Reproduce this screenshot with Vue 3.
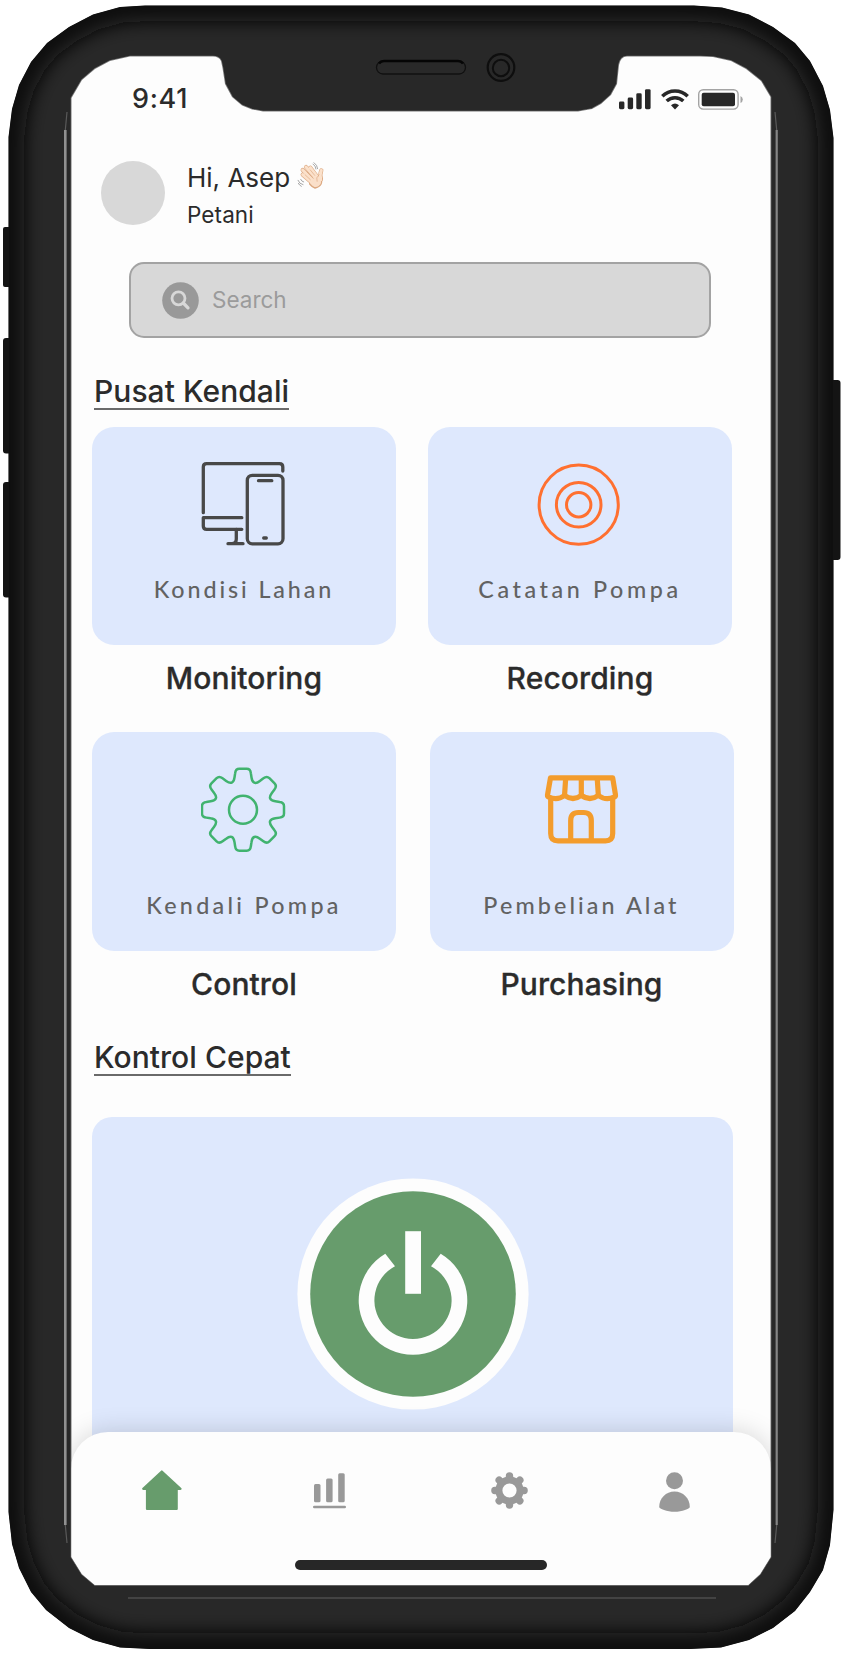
<script setup>
const screenPath =
  'M71.5 98L82 80L95 69L110 61L130 56.5H213Q219 56.5 221 61L222.500 68L225 84L232 97L242 105.500L252 109.500L263 111.500H578L592 109L601 104L611 95L617 84L619 65Q620.5 56.5 627 56.500H700L713 57L731 61L746 69L761 81L770.5 97V1557L760 1574L748 1585H95L82 1574L71.500 1557Z'

const bodyPath =
  'M8.500 137L12 109L19 85L31 62L47 43L69 27L93 14.500L120 7L145 5.500H694L722 7.500L749 14.500L773 27L795 43L810 61L823 86L830 110L833.500 138V1510L830 1545L823 1570L810 1592L795 1611L773 1628L749 1640L721 1647.500L690 1649H150L120 1647.500L93 1640L69 1628L46 1610L31 1592L19 1568L12 1544L8.500 1512Z'

// tracking: caption letter spacing in px
const rows = [
  {
    id: 'top',
    tiles: [
      { icon: 'devices', caption: 'Kondisi Lahan', title: 'Monitoring', tracking: 2.9 },
      { icon: 'rings', caption: 'Catatan Pompa', title: 'Recording', tracking: 3.6 },
    ],
  },
  {
    id: 'bottom',
    tiles: [
      { icon: 'gear', caption: 'Kendali Pompa', title: 'Control', tracking: 3.3 },
      { icon: 'store', caption: 'Pembelian Alat', title: 'Purchasing', tracking: 3.1 },
    ],
  },
]

// One tooth of the cog plus the valley after it, repeated every 45 degrees
const tooth = [
  ['L', [-23.5, -110]],
  ['Q', [-22, -123], [-11, -123]],
  ['L', [11, -123]],
  ['Q', [22, -123], [23.5, -110]],
  ['L', [25.5, -97]],
  ['C', [28, -80], [37, -76], [50.6, -86.6]],
]

function cogPath(scale) {
  let d = `M${-25.5 * scale} ${-97 * scale}`
  for (let i = 0; i < 8; i++) {
    const c = Math.cos((i * Math.PI) / 4)
    const s = Math.sin((i * Math.PI) / 4)
    for (const [cmd, ...pts] of tooth) {
      d += cmd + pts.map(([x, y]) => `${((x * c - y * s) * scale).toFixed(2)} ${((x * s + y * c) * scale).toFixed(2)}`).join(' ')
    }
  }
  return d + 'Z'
}
const cog = cogPath(1 / 3)
const spokes = [0, 45, 90, 135]
</script>

<template>
  <div class="phone">
    <svg class="frame" viewBox="0 0 842 1660" width="842" height="1660" aria-hidden="true">
      <defs>
        <clipPath id="body-clip"><path :d="bodyPath" /></clipPath>
        <filter id="soft" x="-10%" y="-10%" width="120%" height="120%"><feGaussianBlur stdDeviation="9" /></filter>
      </defs>
      <g fill="#141414">
        <rect x="3" y="227" width="12" height="60" rx="2" />
        <rect x="3" y="338" width="12" height="115.500" rx="3" />
        <rect x="3" y="482" width="12" height="115.500" rx="3" />
        <rect x="828" y="380" width="12.500" height="180" rx="3" />
      </g>
      <g clip-path="url(#body-clip)">
        <path :d="bodyPath" fill="#282828" />
        <path :d="bodyPath" fill="none" stroke="#080808" stroke-width="32" filter="url(#soft)" />
      </g>
      <path d="M65.300 130V1525" stroke="#909090" stroke-width="2.600" />
      <path d="M776.700 130V1525" stroke="#858585" stroke-width="2.200" />
      <path d="M65.300 130L67 112M65.300 1525L67 1543M776.700 130L775 112M776.700 1525L775 1543" stroke="#5a5a5a" stroke-width="1.200" />
      <path d="M128 1598H716" stroke="#4c4c4c" stroke-width="1.500" />
      <rect x="376.500" y="61" width="89" height="13" rx="6.500" fill="#292929" stroke="#101010" stroke-width="1.300" />
      <path d="M379 63.500Q381 61 384 61H458Q461 61 463 63.500" fill="none" stroke="#050505" stroke-width="2.600" />
      <g fill="none" stroke="#0e0e0e">
        <circle cx="501" cy="67.500" r="13.300" stroke-width="2.200" />
        <circle cx="501" cy="68" r="8.200" stroke-width="2" />
      </g>
      <path :d="screenPath" fill="none" stroke="#777" stroke-width="1.600" />
    </svg>

    <main class="screen">
      <div class="status">
        <span class="clock">9:41</span>
        <div class="signals">
          <svg width="32" height="21" viewBox="0 0 32 21" fill="#272727">
            <rect x="0" y="12.500" width="5.400" height="7.700" rx="1.400" />
            <rect x="8.700" y="8.500" width="5.400" height="11.700" rx="1.400" />
            <rect x="17.300" y="4.300" width="5.400" height="15.900" rx="1.400" />
            <rect x="26" y="0.200" width="5.600" height="20" rx="1.400" />
          </svg>
          <svg width="28" height="21" viewBox="0 0 28 21" fill="none" stroke="#272727" stroke-width="3.500">
            <path d="M1.300 7.300A18 18 0 0 1 26.700 7.300" />
            <path d="M5.700 12.100A12 12 0 0 1 22.300 12.100" />
            <path d="M10 16.200Q14 12.800 18 16.200L14 20.500Z" fill="#272727" stroke="none" />
          </svg>
          <svg width="45" height="21" viewBox="0 0 45 21">
            <rect x="0.700" y="0.700" width="39.400" height="19.400" rx="4.500" fill="none" stroke="#a4a4a4" stroke-width="1.400" />
            <rect x="3.700" y="3.700" width="33.300" height="13.500" rx="2" fill="#272727" />
            <path d="M42.500 7V14Q44.800 12.800 44.800 10.500T42.500 7Z" fill="#a4a4a4" />
          </svg>
        </div>
      </div>

      <header class="profile">
        <div class="avatar"></div>
        <div class="who">
          <div class="hello">
            <span>Hi, Asep</span>
            <svg class="wave" width="28" height="28" viewBox="0 0 84 84" fill="none" stroke-linecap="round" stroke-linejoin="round">
              <g stroke="#dca982" stroke-width="12.500">
                <path d="M17 38L45 62M17 24L48 56M27 15L57 50M40 17L61 45" />
                <path d="M73 25Q68 36 72 52" />
              </g>
              <path d="M38 58L60 40L72 48Q80 72 54 78Q46 76 38 66Z" fill="#fadfc9" stroke="#dca982" stroke-width="4" />
              <g stroke="#fbe1cb" stroke-width="9">
                <path d="M17 38L45 62M17 24L48 56M27 15L57 50M40 17L61 45" />
                <path d="M73 25Q68 36 71 53" />
              </g>
              <path d="M40 58L60 42L70 50Q77 70 54 75Z" fill="#fadfc9" />
              <path d="M25 39L40 53M30 30L47 46M40 24L53 40M66 38Q55 47 60 58" stroke="#dca982" stroke-width="2" />
              <path d="M48 6Q56 11 57 21M51 2Q61 9 62 20M3 55Q7 66 18 68M4 64Q7 70 13 73M11 52Q14 59 20 60" stroke="#8d8d8d" stroke-width="2.300" />
            </svg>
          </div>
          <div class="role">Petani</div>
        </div>
      </header>

      <div class="search">
        <svg width="37" height="37" viewBox="0 0 37 37" fill="none" stroke="#d8d8d8">
          <circle cx="18.500" cy="18.500" r="18.300" fill="#999" stroke="none" />
          <circle cx="16.500" cy="16.300" r="6.500" stroke-width="2.800" />
          <path d="M21.300 21L26 25.800" stroke-width="3.300" stroke-linecap="round" />
        </svg>
        <span class="placeholder">Search</span>
      </div>

      <h2 class="heading">Pusat Kendali</h2>

      <section class="tiles">
        <div v-for="row in rows" :key="row.id" class="row" :class="row.id">
          <div v-for="tile in row.tiles" :key="tile.title" class="tile">
            <div class="card">
              <svg v-if="tile.icon === 'devices'" class="icon" viewBox="0 0 86 86" fill="none" stroke="#484848" stroke-width="3.300" stroke-linecap="round" stroke-linejoin="round">
                <path d="M2.300 51.700V6Q2.300 2.700 5.600 2.700H78.500Q81.800 2.700 81.800 6V10" />
                <path d="M40.800 56.700H2.300V65Q2.300 68.300 5.600 68.300H40.800" />
                <path d="M35.300 68.500V78Q35.300 82.500 31 82.700M27 82.700H42" />
                <rect x="46.300" y="14.300" width="35.700" height="68.500" rx="5" />
                <path d="M57.500 19.700H70.800M62.700 77H65.300" />
              </svg>
              <svg v-else-if="tile.icon === 'rings'" class="icon" viewBox="0 0 86 86" fill="none" stroke="#ff7030" stroke-width="3">
                <circle cx="41.700" cy="43.700" r="39.600" />
                <circle cx="41.700" cy="43.700" r="22.300" />
                <circle cx="41.700" cy="43.700" r="12.200" />
              </svg>
              <svg v-else-if="tile.icon === 'gear'" class="icon" viewBox="0 0 86 86" fill="none" stroke="#41b36f" stroke-width="2.500">
                <g transform="translate(42 42.800)">
                  <path :d="cog" />
                  <circle r="14" />
                </g>
              </svg>
              <svg v-else class="icon" viewBox="0 0 86 86" fill="none" stroke="#f39c2c" stroke-width="5.200" stroke-linejoin="round">
                <path d="M11.500 10.800H73.700L76.500 28Q76.800 30 75 30Q67 34 59.300 28.500Q51 34.500 42.300 28.500Q34 34.500 25.600 28.500Q18 34 10 30Q8.200 30 8.500 28Z" />
                <path d="M26.700 11L25.500 29M42.300 11V29M58.200 11L59.400 29" />
                <path d="M11.700 31V66.500Q11.700 73.800 19 73.800H66.500Q73.700 73.800 73.700 66.500V31" />
                <path d="M31.700 73V53.500Q31.700 45.500 39.500 45.500H44.500Q52.300 45.500 52.300 53.500V73" />
              </svg>
              <span class="caption" :style="{ letterSpacing: tile.tracking + 'px' }">{{ tile.caption }}</span>
            </div>
            <div class="title">{{ tile.title }}</div>
          </div>
        </div>
      </section>

      <h2 class="heading second">Kontrol Cepat</h2>

      <section class="quick">
        <svg width="232" height="232" viewBox="-116 -116 232 232">
          <circle r="115.600" fill="#fdfdfd" />
          <circle r="102.800" fill="#679c6c" />
          <path d="M-7.800 -62.800H8V-0.200H-7.800Z" fill="#fdfdfd" />
          <path d="M-27.700 -40.200L-18 -27.800A38.600 38.600 0 1 0 18 -27.800L27.700 -40.200A54.300 54.300 0 1 1 -27.700 -40.200Z" fill="#fdfdfd" />
        </svg>
      </section>

      <nav class="tabs">
        <div class="tab-icons">
          <svg class="home" width="40" height="41" viewBox="0 0 40 41">
            <path d="M19.800 1.500L38.500 18.800H34.700V39H5V18.800H1.200Z" fill="#679c6c" stroke="#679c6c" stroke-width="2.200" stroke-linejoin="round" />
          </svg>
          <svg class="chart" width="33" height="36" viewBox="0 0 33 36" fill="#999">
            <rect x="1" y="11" width="6.500" height="18.300" rx="1.500" />
            <rect x="13.100" y="5.500" width="6.500" height="23.800" rx="1.500" />
            <rect x="25.200" y="0.200" width="6.500" height="29.100" rx="1.500" />
            <rect x="0" y="32.800" width="33" height="2.500" rx="1.200" />
          </svg>
          <svg class="settings" width="37" height="37" viewBox="-18.500 -18.500 37 37">
            <circle r="10.600" fill="none" stroke="#999" stroke-width="7" />
            <g fill="none" stroke="#999" stroke-width="7.400" stroke-linecap="round">
              <path v-for="a in spokes" :key="a" d="M0 -12V-14.600M0 12V14.600" :transform="`rotate(${a})`" />
            </g>
          </svg>
          <svg class="user" width="31" height="40" viewBox="0 0 31 40" fill="#999">
            <circle cx="15.500" cy="8.800" r="8.500" />
            <path d="M0.200 35C0.200 26 7 19.500 15.500 19.500S30.800 26 30.800 35C30.800 36.500 23 39.800 15.500 39.800S0.200 36.500 0.200 35Z" />
          </svg>
        </div>
        <div class="indicator"></div>
      </nav>
    </main>
  </div>
</template>

<style>
body {
  margin: 0;
  background: #fff;
}
</style>

<style scoped>
.phone {
  position: relative;
  box-sizing: border-box;
  width: 842px;
  height: 1660px;
  overflow: hidden;
  font-family: Inter, 'Liberation Sans', sans-serif;
  color: #2b2b2b;
}
.frame {
  position: absolute;
  inset: 0;
}
.screen {
  position: relative;
  box-sizing: border-box;
  width: 842px;
  height: 1660px;
  padding: 56px 71px 75px;
  display: flex;
  flex-direction: column;
  background: #fdfdfd;
  clip-path: path('M71.5 98L82 80L95 69L110 61L130 56.5H213Q219 56.5 221 61L222.5 68L225 84L232 97L242 105.5L252 109.5L263 111.5H578L592 109L601 104L611 95L617 84L619 65Q620.5 56.5 627 56.5H700L713 57L731 61L746 69L761 81L770.5 97V1557L760 1574L748 1585H95L82 1574L71.5 1557Z');
}
svg {
  display: block;
  flex: none;
}
.status {
  height: 84px;
  flex: none;
  display: flex;
  align-items: center;
  justify-content: space-between;
  padding: 0 28px 0 61px;
}
.clock {
  font-size: 27px;
  font-weight: 500;
  letter-spacing: 0.7px;
}
.signals {
  display: flex;
  gap: 9.5px;
  padding-top: 2px;
}
.profile {
  display: flex;
  flex: none;
  gap: 22px;
  height: 74px;
  padding: 20px 0 0 30px;
}
.avatar {
  width: 64px;
  height: 64px;
  margin-top: 1px;
  border-radius: 50%;
  background: #d8d8d8;
}
.who {
  margin-top: -1px;
  line-height: 37px;
}
.hello {
  display: flex;
  gap: 7px;
  font-size: 26px;
}
.wave {
  margin-top: 3px;
}
.role {
  font-size: 22.5px;
  letter-spacing: 0.1px;
}
.search {
  box-sizing: border-box;
  flex: none;
  height: 76px;
  margin: 28px 60px 0 58px;
  padding-left: 31px;
  display: flex;
  align-items: center;
  gap: 13px;
  border: 2px solid #a3a3a3;
  border-radius: 15px;
  background: #d8d8d8;
  color: #9b9b9b;
  font-size: 22.5px;
}
.placeholder {
  margin-top: -2px;
}
.heading {
  align-self: flex-start;
  box-sizing: border-box;
  flex: none;
  height: 36px;
  margin: 36px 0 0 23px;
  border-bottom: 2px solid #6a6a6a;
  font-size: 30px;
  font-weight: 500;
  line-height: 35px;
  letter-spacing: 0.05px;
  white-space: nowrap;
}
.heading.second {
  margin-top: 36.5px;
}
.tiles {
  flex: none;
  display: flex;
  flex-direction: column;
  gap: 34px;
  margin: 16.5px 0 0 21px;
}
.row {
  display: flex;
  gap: 32px;
}
.row.bottom {
  gap: 33.5px;
}
.tile {
  width: 304px;
}
.card {
  box-sizing: border-box;
  height: 218.5px;
  padding-top: 34.5px;
  display: flex;
  flex-direction: column;
  align-items: center;
  border-radius: 22px;
  background: #dee8fd;
}
.icon {
  width: 86px;
  height: 86px;
}
.caption {
  margin-top: 27px;
  font-family: Lato, 'Noto Sans', sans-serif;
  font-size: 23.3px;
  font-weight: 500;
  line-height: 30px;
  color: #626262;
  white-space: nowrap;
}
.bottom .caption {
  margin-top: 37px;
}
.title {
  margin-top: 13px;
  font-size: 30px;
  font-weight: 500;
  line-height: 40px;
  letter-spacing: 0.1px;
  text-align: center;
  -webkit-text-stroke: 0.3px #2b2b2b;
}
.quick {
  box-sizing: border-box;
  flex: none;
  width: 641px;
  height: 353px;
  margin: 41px 0 0 21px;
  padding: 60.5px 0 0 205px;
  border-radius: 20px 20px 0 0;
  background: #dee8fd;
}
.tabs {
  position: relative;
  box-sizing: border-box;
  flex: none;
  height: 153px;
  margin-top: -38px;
  padding-top: 38px;
  border-radius: 37px 37px 0 0;
  background: #fdfdfd;
  box-shadow: 0 0 26px rgba(0, 0, 0, 0.17);
}
.tab-icons {
  display: flex;
  height: 41px;
  align-items: center;
  padding-left: 71px;
}
.chart {
  margin-left: 131px;
}
.settings {
  margin-left: 144.5px;
}
.user {
  margin: 3px 0 0 131px;
}
.indicator {
  width: 252px;
  height: 10px;
  margin: 49px 0 0 224px;
  border-radius: 5px;
  background: #272727;
}
</style>
